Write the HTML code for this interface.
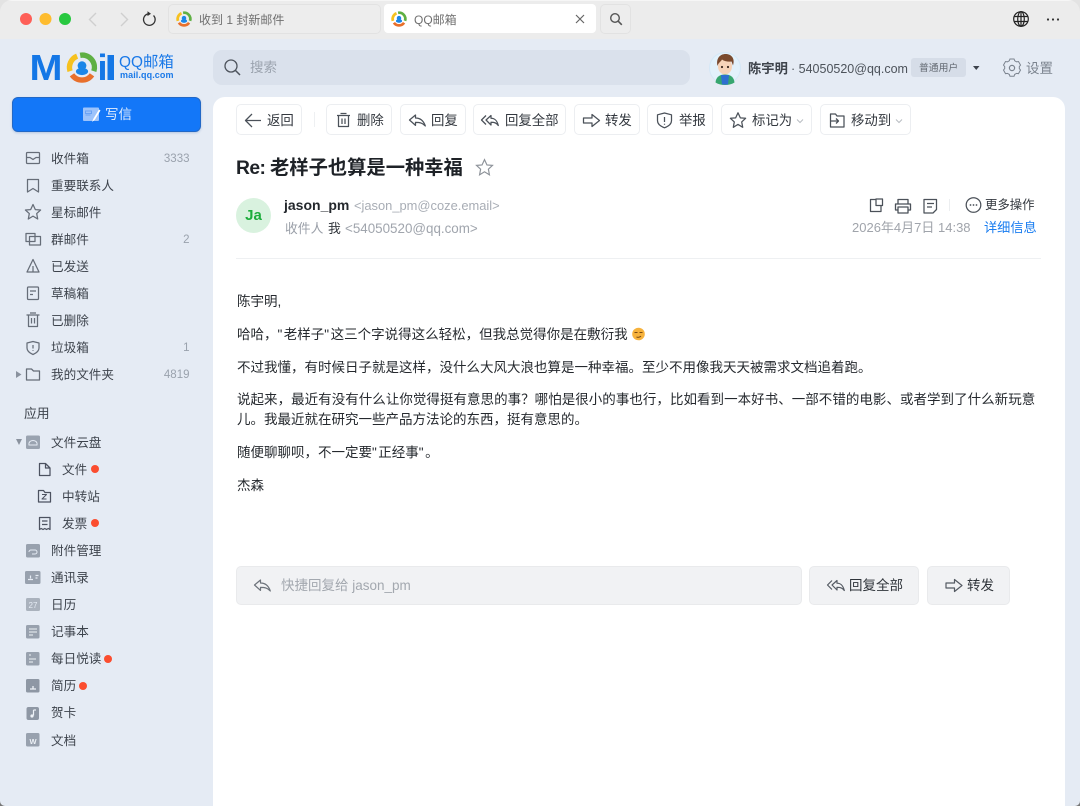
<!DOCTYPE html>
<html lang="zh">
<head>
<meta charset="utf-8">
<title>QQ邮箱</title>
<style>
html,body{margin:0;padding:0;width:1080px;height:806px;overflow:hidden;background:#e5ebf4;}
body{position:relative;font-family:"Liberation Sans","Noto Sans CJK SC",sans-serif;}
.box{position:absolute;box-sizing:border-box;}
.t{position:absolute;line-height:20px;margin-top:1px;white-space:nowrap;color:#3d434c;font-size:12.6px;z-index:3;}
.b{font-size:13.4px;color:#33383f;}
.m{font-size:13.5px;color:#25292e;}
.q{letter-spacing:1.500px;}
.n{font-size:11.5px;color:#9aa2ad;text-align:right;width:40px;}
.btn{position:absolute;box-sizing:border-box;top:104px;height:31px;border:1px solid #eceef1;border-radius:5px;background:#fff;}
.btn2{position:absolute;box-sizing:border-box;top:566px;height:39px;background:#f1f2f4;border:1px solid #e9eaec;border-radius:5px;}
svg.o{position:absolute;left:0;top:0;z-index:2;}
</style>
</head>
<body>
<!-- title bar -->
<div class="box" style="left:0;top:0;width:1080px;height:39px;background:#ececec;border-top:1px solid #f6f6f6;"></div>
<div class="box" style="left:168px;top:4px;width:213px;height:30px;border:1px solid #e2e2e2;border-radius:5px;background:#ededed;"></div>
<div class="box" style="left:384px;top:4px;width:212px;height:29px;border-radius:4px;background:#fff;"></div>
<div class="box" style="left:600px;top:4px;width:31px;height:30px;border:1px solid #e2e2e2;border-radius:5px;background:#ededed;"></div>
<div class="t" style="left:199px;top:9px;font-size:12px;color:#6f6f6f;">收到 1 封新邮件</div>
<div class="t" style="left:414px;top:9px;font-size:12px;color:#6f6f6f;">QQ邮箱</div>

<!-- search + account -->
<div class="box" style="left:213px;top:50px;width:477px;height:35px;border-radius:9px;background:#dae1ec;"></div>
<div class="t" style="left:250px;top:57px;font-size:13.5px;color:#9ba3ae;">搜索</div>
<div class="t" style="left:119px;top:52px;font-size:15.4px;color:#1a79e8;">QQ邮箱</div>
<div class="t" style="left:120px;top:64px;font-size:9px;font-weight:bold;color:#1a79e8;letter-spacing:.1px;">mail.qq.com</div>
<div class="t" style="left:748px;top:58px;font-size:13.3px;font-weight:bold;color:#3f444c;">陈宇明</div>
<div class="t" style="left:791px;top:58px;font-size:12.5px;color:#4d535b;">· 54050520@qq.com</div>
<div class="box" style="left:911px;top:58px;width:55px;height:19px;border-radius:3px;background:#d6dde8;"></div>
<div class="t" style="left:919px;top:58px;font-size:9.8px;color:#666c75;">普通用户</div>
<div class="t" style="left:1026px;top:58px;font-size:13.5px;color:#7b838e;">设置</div>

<!-- compose -->
<div class="box" style="left:12px;top:97px;width:189px;height:35px;border-radius:6px;background:#1377f8;border:1px solid #2268c6;box-shadow:0 1px 2px rgba(40,90,170,.25);"></div>
<div class="t" style="left:105px;top:104px;font-size:13.5px;color:#e4eefc;">写信</div>

<!-- sidebar -->
<div class="t" style="left:51px;top:148px;">收件箱</div><div class="t n" style="left:149.5px;top:148px;">3333</div>
<div class="t" style="left:51px;top:175px;">重要联系人</div>
<div class="t" style="left:51px;top:202px;">星标邮件</div>
<div class="t" style="left:51px;top:229px;">群邮件</div><div class="t n" style="left:149.5px;top:229px;">2</div>
<div class="t" style="left:51px;top:256px;">已发送</div>
<div class="t" style="left:51px;top:283px;">草稿箱</div>
<div class="t" style="left:51px;top:310px;">已删除</div>
<div class="t" style="left:51px;top:337px;">垃圾箱</div><div class="t n" style="left:149.5px;top:337px;">1</div>
<div class="t" style="left:51px;top:364px;">我的文件夹</div><div class="t n" style="left:149.5px;top:364px;">4819</div>
<div class="t" style="left:24px;top:403px;font-size:12.8px;">应用</div>
<div class="t" style="left:51px;top:432px;">文件云盘</div>
<div class="t" style="left:62px;top:459px;">文件</div>
<div class="t" style="left:62px;top:486px;">中转站</div>
<div class="t" style="left:62px;top:513px;">发票</div>
<div class="t" style="left:51px;top:540px;">附件管理</div>
<div class="t" style="left:51px;top:567px;">通讯录</div>
<div class="t" style="left:51px;top:594px;">日历</div>
<div class="t" style="left:51px;top:621px;">记事本</div>
<div class="t" style="left:51px;top:648px;">每日悦读</div>
<div class="t" style="left:51px;top:675px;">简历</div>
<div class="t" style="left:51px;top:702px;">贺卡</div>
<div class="t" style="left:51px;top:730px;">文档</div>

<!-- main panel -->
<div class="box" style="left:213px;top:97px;width:852px;height:709px;background:#fff;border-radius:12px 12px 0 0;"></div>

<div class="btn" style="left:236px;width:66px;"></div>
<div class="btn" style="left:326px;width:66px;"></div>
<div class="btn" style="left:400px;width:66px;"></div>
<div class="btn" style="left:473px;width:93px;"></div>
<div class="btn" style="left:574px;width:66px;"></div>
<div class="btn" style="left:647px;width:66px;"></div>
<div class="btn" style="left:721px;width:91px;"></div>
<div class="btn" style="left:820px;width:91px;"></div>
<div class="t b" style="left:267px;top:110px;">返回</div>
<div class="t b" style="left:357px;top:110px;">删除</div>
<div class="t b" style="left:431px;top:110px;">回复</div>
<div class="t b" style="left:505px;top:110px;">回复全部</div>
<div class="t b" style="left:605px;top:110px;">转发</div>
<div class="t b" style="left:679px;top:110px;">举报</div>
<div class="t b" style="left:752px;top:110px;">标记为</div>
<div class="t b" style="left:851px;top:110px;">移动到</div>

<div class="t" style="left:236px;top:158px;font-size:19.3px;font-weight:bold;color:#1e2227;"><span style="letter-spacing:-.6px;">Re: </span>老样子也算是一种幸福</div>

<div class="box" style="left:236px;top:198px;width:35px;height:35px;border-radius:50%;background:#d9f2df;"></div>
<div class="t" style="left:236px;width:35px;text-align:center;top:205px;font-size:15px;font-weight:bold;color:#1dad3c;">Ja</div>
<div class="t" style="left:284px;top:194px;font-size:14px;font-weight:bold;color:#24282d;">jason_pm</div>
<div class="t" style="left:354px;top:195px;font-size:12.9px;color:#a8adb5;">&lt;jason_pm@coze.email&gt;</div>
<div class="t" style="left:285px;top:218px;font-size:12.8px;color:#9a9fa8;">收件人</div>
<div class="t" style="left:328px;top:218px;font-size:12.8px;color:#30343a;">我</div>
<div class="t" style="left:345px;top:218px;font-size:13.4px;color:#a0a5ad;">&lt;54050520@qq.com&gt;</div>
<div class="t" style="left:985px;top:194px;font-size:12.4px;color:#33383f;">更多操作</div>
<div class="t" style="left:852px;top:217px;font-size:13px;color:#a0a4ab;">2026年4月7日 14:38</div>
<div class="t" style="left:984px;top:217px;font-size:13.2px;color:#1a7df0;">详细信息</div>
<div class="box" style="left:236px;top:258px;width:805px;height:1px;background:#eef0f2;"></div>

<div class="t m" style="left:237px;top:291px;">陈宇明,</div>
<div class="t m" style="left:237px;top:324px;">哈哈，<span class="q">"</span>老样子<span class="q">"</span>这三个字说得这么轻松，但我总觉得你是在敷衍我</div>
<div class="t m" style="left:237px;top:357px;">不过我懂，有时候日子就是这样，没什么大风大浪也算是一种幸福。至少不用像我天天被需求文档追着跑。</div>
<div class="t m" style="left:237px;top:389px;letter-spacing:.03px;">说起来，最近有没有什么让你觉得挺有意思的事？哪怕是很小的事也行，比如看到一本好书、一部不错的电影、或者学到了什么新玩意</div>
<div class="t m" style="left:237px;top:409px;">儿。我最近就在研究一些产品方法论的东西，挺有意思的。</div>
<div class="t m" style="left:237px;top:442px;">随便聊聊呗，不一定要<span class="q">"</span>正经事<span class="q">"</span>。</div>
<div class="t m" style="left:237px;top:475px;">杰森</div>

<div class="btn2" style="left:236px;width:566px;"></div>
<div class="btn2" style="left:809px;width:110px;"></div>
<div class="btn2" style="left:927px;width:83px;"></div>
<div class="t" style="left:281px;top:575px;font-size:13.5px;color:#a3a8af;">快捷回复给 jason_pm</div>
<div class="t" style="left:849px;top:575px;font-size:13.5px;color:#2f343a;">回复全部</div>
<div class="t" style="left:967px;top:575px;font-size:13.5px;color:#2f343a;">转发</div>

<svg class="o" width="1080" height="806" viewBox="0 0 1080 806" fill="none">
<defs>
<g id="ring" fill="none">
<path d="M-1.5-10A10 10 0 0 1 9.7 3" stroke="#5fb043" stroke-width="4.4"/>
<path d="M8.2 6A10 10 0 0 1-8.2 6" stroke="#e8702c" stroke-width="4.4"/>
<path d="M-9.8 3A10 10 0 0 1-4-9.3" stroke="#f6c11f" stroke-width="4.4"/>
<circle cx="0" cy="-1.5" r="3.6" fill="#1a86e8"/>
<ellipse cx="0" cy="3.2" rx="5" ry="3" fill="#1a86e8"/>
</g>
<path id="star" d="M0-8L2.35-2.9L7.6-2.5L3.7 1.1L4.7 6.5L0 3.6L-4.7 6.5L-3.7 1.1L-7.6-2.5L-2.35-2.9Z"/>
<path id="reply" d="M-8 0l6-5v3c5 0 8 2.5 9.8 8c-2.6-3-5.4-3.6-9.8-3.6v3z"/>
<path id="replyall" d="M-3.500 0l5-4.500v2.700c4 0 6 2.300 7.300 7.300c-2-2.700-3.800-3.200-7.300-3.200v2.700zM-3.500-4.500l-4.500 4.500l4.500 4.500"/>
<path id="fwd" d="M-8.5-2.5h8.5v-3.5l7.500 6l-7.500 6v-3.500h-8.500z"/>
</defs>

<!-- traffic lights -->
<circle cx="26" cy="19" r="6" fill="#fe5f57"/>
<circle cx="45.500" cy="19" r="6" fill="#febc2e"/>
<circle cx="65" cy="19" r="6" fill="#28c840"/>
<path d="M96 13l-6.500 6.500l6.500 6.500" stroke="#cfcfcf" stroke-width="1.400"/>
<path d="M121 13l6.500 6.500l-6.500 6.500" stroke="#cfcfcf" stroke-width="1.400"/>
<path d="M153.500 15.500A5.800 5.800 0 1 1 148.500 13.800" stroke="#333" stroke-width="1.300"/>
<path d="M147.500 11.300l3.500 2.500l-3.500 2.300z" fill="#333"/>
<use href="#ring" transform="translate(184 19) scale(.62)"/>
<use href="#ring" transform="translate(399 19) scale(.62)"/>
<path d="M576 15l8 8M584 15l-8 8" stroke="#666" stroke-width="1.200"/>
<circle cx="615" cy="18" r="4.300" stroke="#555" stroke-width="1.400"/>
<path d="M618.200 21.200l3.600 3.600" stroke="#555" stroke-width="1.600"/>
<g stroke="#222" stroke-width="1.200">
<circle cx="1021" cy="19" r="7.300"/>
<ellipse cx="1021" cy="19" rx="3.300" ry="7.300"/>
<path d="M1021 11.700v14.600M1014 16.500h14M1014 21.500h14"/>
</g>
<g fill="#333"><circle cx="1048" cy="19.500" r="1.100"/><circle cx="1053" cy="19.500" r="1.100"/><circle cx="1058" cy="19.500" r="1.100"/></g>

<!-- logo -->
<text transform="translate(29.500 80) scale(1.100 1)" font-family="Liberation Sans" font-weight="bold" font-size="36" fill="#1477e6">M</text>
<use href="#ring" transform="translate(82 67.500) scale(1.220)"/>
<text x="97.500" y="80" font-family="Liberation Sans" font-weight="bold" font-size="36" fill="#1477e6">i</text>
<rect x="107.500" y="55" width="6.500" height="25" fill="#1477e6"/>

<!-- search icon -->
<circle cx="231" cy="66" r="6" stroke="#4d535c" stroke-width="1.300"/>
<path d="M235.500 70.500l4.500 4.500" stroke="#4d535c" stroke-width="1.500"/>

<!-- avatar -->
<circle cx="725" cy="68" r="15.500" fill="#e2f1fb" stroke="#d5e8f7" stroke-width="1"/>
<path d="M715.500 82.500c.5-5 3.500-8 9.500-8s9 3 9.500 8c-2.500 1.700-6 2.500-9.500 2.500s-7-.8-9.500-2.500z" fill="#37a66f"/>
<path d="M721 75h8l-1 9.500h-6z" fill="#2f6fd0"/>
<ellipse cx="725" cy="66.500" rx="7" ry="8" fill="#f6d3b8"/>
<path d="M717.500 66c-1.800-8 3-12 8-12s10 3.500 7.500 11.500l-1.500-4c-3 .5-7 0-9.500-2c-1 2-3.500 3-4.500 6.500z" fill="#7a4a2e"/>
<circle cx="722" cy="67" r="1.100" fill="#3b2a20"/><circle cx="728" cy="67" r="1.100" fill="#3b2a20"/>

<path d="M973 66h6.500l-3.250 4z" fill="#3d434c"/>
<!-- gear -->
<g stroke="#7b838e" stroke-width="1.200">
<path d="M1009.500 59.500h5l.8 2.200 2.300 1.300 2.300-.4 2.500 4.400-1.500 1.800v2.400l1.500 1.800-2.500 4.400-2.300-.4-2.300 1.300-.8 2.200h-5l-.8-2.200-2.300-1.300-2.300.4-2.500-4.400 1.500-1.800v-2.400l-1.500-1.800 2.500-4.400 2.300.4 2.300-1.300z" transform="translate(1012 68) scale(.82) translate(-1012 -70.500)"/>
<circle cx="1012" cy="68" r="2.600"/>
</g>

<!-- compose icon -->
<rect x="83" y="107.500" width="16" height="13.500" rx="1" fill="#9dc3fb"/>
<path d="M85.500 111h6v2.500h-6zM85.500 115h5" stroke="#6ba3f5" stroke-width="1"/>
<path d="M99 109.500l-5.500 9-1.500 3.500 3-2.500 5.500-9z" fill="#fff"/>

<!-- sidebar icons -->
<g stroke="#666d78" stroke-width="1.250" stroke-linejoin="round">
<rect x="26.500" y="152.500" width="13" height="11" rx="1"/>
<path d="M26.500 157.500h3.500l3 2 3-2h3.500"/>
<path d="M27.500 179.500h11v12.500l-5.500-3.500-5.500 3.500z"/>
<use href="#star" transform="translate(33 212.500)"/>
<path d="M35 241.500h-9v-8h9z"/>
<path d="M29.500 236.500h11v8.500h-11z"/>
<path d="M33 259.500l6 12.500h-12zM33 266v6"/>
<rect x="27.500" y="287" width="11" height="12.500" rx="1"/>
<path d="M30 291h6M30 294.500h3"/>
<path d="M26.500 315h13M30 313h6M28.500 315.500v11h9v-11M31.500 318v5.500M34.500 318v5.500"/>
<path d="M33 341.500l6 1.500v5c0 3-2.500 5-6 6.500c-3.500-1.500-6-3.500-6-6.500v-5zM33 345v3.500M33 350v.8"/>
<path d="M26.500 369h5l2 2h6v9h-13z"/>
</g>
<path d="M16 371l5.500 3.500-5.500 3.500z" fill="#8a929e"/>
<path d="M16 439h6l-3 6z" fill="#8a929e"/>
<rect x="26" y="435.500" width="14" height="13.500" rx="1.500" fill="#9aa3b0"/>
<path d="M29 445c-.5-3 1.500-4.500 4-4.500s4.500 1.500 4 4.500z" stroke="#e5ebf4" stroke-width="1"/>
<g stroke="#4c5260" stroke-width="1.250" stroke-linejoin="round">
<path d="M39.500 463.500h6l4.500 4.500v7.500h-10.500zM45.500 463.500v4.500h4.500"/>
<path d="M38.500 490.500h5l1.500 2h5.500v9.500h-12z"/>
<path d="M42 494.500h4.500l-4.500 4.500h4.500" stroke-width="1"/>
<path d="M39.500 517.500h10.500v12l-1.700-1-1.800 1-1.700-1-1.800 1-1.800-1-1.700 1zM42 521h5.500M42 524.500h5.500"/>
</g>
<g fill="#fb4d2f">
<circle cx="95" cy="469" r="4"/><circle cx="95" cy="523" r="4"/><circle cx="108" cy="659" r="4"/><circle cx="83" cy="686" r="4"/>
</g>
<!-- app icons -->
<rect x="26" y="544" width="14" height="13.500" rx="1.500" fill="#98a1ae"/>
<path d="M29 552a2 2 0 0 1 2-2h4a2 2 0 0 1 0 4h-3" stroke="#e5ebf4" stroke-width="1"/>
<rect x="25" y="571" width="15.500" height="13" rx="1.500" fill="#98a1ae"/>
<path d="M28 579.500h5M30.500 575.500v3M35.500 575.500h3M35.500 578h2" stroke="#e5ebf4" stroke-width="1.200"/>
<rect x="26" y="598" width="14" height="13" rx="1.500" fill="#aab2bd"/>
<text x="33" y="608" font-family="Liberation Sans" font-size="8" fill="#e5ebf4" text-anchor="middle">27</text>
<rect x="26" y="625" width="13.500" height="13.500" rx="1.500" fill="#98a1ae"/>
<path d="M29 629h8M29 632h8M29 635h4" stroke="#eef2f7" stroke-width="1"/>
<rect x="26" y="652" width="13.500" height="13.500" rx="1.500" fill="#98a1ae"/>
<path d="M29 655h2M29 659h7M29 662h4" stroke="#eef2f7" stroke-width="1"/>
<rect x="26" y="679" width="13.500" height="13.500" rx="1.500" fill="#8e97a4"/>
<path d="M30 689h6M33 686v3" stroke="#eef2f7" stroke-width="1.300"/>
<rect x="26.500" y="707" width="12.500" height="13" rx="2" fill="#8e97a4"/>
<path d="M33.500 710v5.500" stroke="#eef2f7" stroke-width="1.200"/><circle cx="32" cy="716" r="1.600" fill="#eef2f7"/><path d="M33.500 710h2.500" stroke="#eef2f7" stroke-width="1.200"/>
<rect x="26" y="733" width="13.500" height="13.500" rx="1.500" fill="#98a1ae"/>
<text x="33" y="744" font-family="Liberation Sans" font-weight="bold" font-size="7.500" fill="#eef2f7" text-anchor="middle">W</text>

<!-- toolbar icons -->
<path d="M314.500 112v15" stroke="#eef0f2"/>
<g stroke="#4b5159" stroke-width="1.250" stroke-linejoin="round">
<path d="M261 120.500h-15M252 114l-6.500 6.500l6.500 6.500"/>
<path d="M337 115.500h13M340.500 113.500h6M338.500 115.500v11h10v-11M342 118.500v5.500M345 118.500v5.500"/>
<use href="#reply" transform="translate(417.500 120)"/>
<use href="#replyall" transform="translate(489.500 120)"/>
<use href="#fwd" transform="translate(592 120.500)"/>
<path d="M664.500 113l7 1.800v6c0 3-3 5.500-7 7c-4-1.500-7-4-7-7v-6zM664.500 117v5M664.500 123.800v1"/>
<use href="#star" transform="translate(738 120.800)"/>
<path d="M830.500 114h5l1.500 2h7v11h-13.500zM830.500 121h8M836 118.500l2.500 2.500-2.500 2.500"/>
</g>
<path d="M797 119.500l3 3l3-3M896 119.500l3 3l3-3" stroke="#b8bcc2"/>

<use href="#star" transform="translate(484.500 168) scale(1.050)" stroke="#8c9198" stroke-width="1.100"/>

<!-- header actions -->
<g stroke="#4b5159" stroke-width="1.250" stroke-linejoin="round">
<path d="M876 199.500h-5.500v12h10.500v-6"/><path d="M876 199h6.500v6.500h-6.500z"/>
<path d="M898 204v-4.500h10v4.500M897.500 210h-2v-6h15v6h-2M898 207h10v6h-10z" stroke-width="1.300"/>
<path d="M924 199.500h12.500v10l-3.500 3.500h-9zM927 203.500h7M927 207h5"/>
<circle cx="973.500" cy="205" r="7.300"/>
</g>
<g fill="#4b5159"><circle cx="970.500" cy="205" r=".9"/><circle cx="973.500" cy="205" r=".9"/><circle cx="976.500" cy="205" r=".9"/></g>
<path d="M949.500 199v12" stroke="#eceef0"/>

<!-- emoji -->
<circle cx="638.500" cy="334" r="6.300" fill="#f6b23c"/>
<path d="M634.500 332.500h3M639.500 332.500h3" stroke="#7a4a12" stroke-width="1"/>
<path d="M636.500 337c1.500.6 3 .4 4.500-.8" stroke="#7a4a12" stroke-width="1"/>

<!-- quick reply icons -->
<g stroke="#6d737b" stroke-width="1.200" stroke-linejoin="round">
<use href="#reply" transform="translate(262.500 585)"/>
</g>
<g stroke="#555b63" stroke-width="1.200" stroke-linejoin="round">
<use href="#replyall" transform="translate(835.500 585)"/>
<use href="#fwd" transform="translate(954.500 585.500)"/>
</g>

<!-- window corners -->
<path d="M0 12V0H12A12 12 0 0 0 0 12Z" fill="#e3e3e3"/>
<path d="M1080 12V0H1068A12 12 0 0 1 1080 12Z" fill="#e3e3e3"/>
<path d="M1080 801V806H1075A5 5 0 0 0 1080 801Z" fill="#777"/>
<path d="M0 801V806H5A5 5 0 0 1 0 801Z" fill="#777"/>
</svg>
</body>
</html>
